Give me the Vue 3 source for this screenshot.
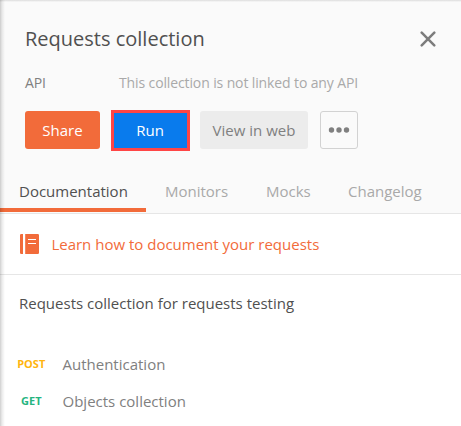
<script setup>
const tabs = ['Documentation', 'Monitors', 'Mocks', 'Changelog']
const requests = [
  { method: 'POST', name: 'Authentication' },
  { method: 'GET', name: 'Objects collection' },
]
</script>

<template>
  <main class="panel">
    <header class="header">
      <div class="title-row">
        <h1 class="title">Requests collection</h1>
        <button class="close" aria-label="Close">
          <svg width="16" height="16" viewBox="0 0 16 16">
            <path d="M1.7 1.7 14.3 14.3M14.3 1.7 1.7 14.3" fill="none" stroke="#7c7c7c" stroke-width="2.5" stroke-linecap="round" />
          </svg>
        </button>
      </div>
      <div class="api-row">
        <span class="api-label">API</span>
        <span class="api-text">This collection is not linked to any API</span>
      </div>
      <div class="actions">
        <button class="btn share">Share</button>
        <button class="btn run">Run</button>
        <button class="btn view">View in web</button>
        <button class="btn more" aria-label="More actions">
          <svg width="22" height="6" viewBox="0 0 22 6" fill="#808080">
            <circle cx="3.5" cy="3" r="2.7" />
            <circle cx="11" cy="3" r="2.7" />
            <circle cx="18.5" cy="3" r="2.7" />
          </svg>
        </button>
      </div>
      <nav class="tabs">
        <a v-for="(tab, i) in tabs" :key="tab" class="tab" :class="[tab.toLowerCase(), { active: i === 0 }]">{{ tab }}</a>
      </nav>
    </header>
    <a class="learn">
      <svg width="19" height="20" viewBox="0 0 19 20">
        <path d="M1.2 0H3V20H1.2A1.2 1.2 0 0 1 0 18.8V1.2A1.2 1.2 0 0 1 1.2 0ZM5.2 0H17.8A1.2 1.2 0 0 1 19 1.2V18.8A1.2 1.2 0 0 1 17.8 20H5.2Z" fill="#f26b3a" />
        <path d="M8 5.5H16M8 9.5H16" stroke="#fff" stroke-width="1.2" />
      </svg>
      <span class="learn-text">Learn how to document your requests</span>
    </a>
    <p class="description">Requests collection for requests testing</p>
    <ul class="requests">
      <li v-for="r in requests" :key="r.name" class="request">
        <span class="method" :class="r.method.toLowerCase()">{{ r.method }}</span>
        <span class="name">{{ r.name }}</span>
      </li>
    </ul>
  </main>
</template>

<style>
body {
  margin: 0;
}
</style>

<style scoped>
.panel {
  position: relative;
  box-sizing: border-box;
  width: 461px;
  height: 426px;
  overflow: hidden;
  background: #fff;
  font-family: "Open Sans", sans-serif;
  font-size: 15px;
  line-height: 20px;
  color: #505050;
  white-space: nowrap;
}
.panel::after {
  content: "";
  position: absolute;
  inset: 0;
  pointer-events: none;
  background:
    linear-gradient(to right, rgba(0, 0, 0, 0.19), rgba(0, 0, 0, 0.08) 2px, rgba(0, 0, 0, 0) 5px),
    linear-gradient(to bottom, rgba(0, 0, 0, 0.12), rgba(0, 0, 0, 0) 2px);
}
.header {
  box-sizing: border-box;
  height: 214px;
  background: #fafafa;
  border-bottom: 1px solid #e6e6e6;
}
.title-row {
  display: flex;
  align-items: center;
  justify-content: space-between;
  height: 28px;
  padding: 25px 25px 0;
}
.title {
  margin: 0;
  font-size: 20px;
  font-weight: 400;
  line-height: 28px;
}
.close {
  display: flex;
  padding: 0;
  border: 0;
  background: none;
}
.api-row {
  display: flex;
  padding: 20px 25px 0;
  font-size: 14px;
  letter-spacing: -0.12px;
  color: #808080;
}
.api-label {
  width: 94px;
}
.api-text {
  color: #a9a9a9;
}
.actions {
  display: flex;
  align-items: center;
  height: 42px;
  margin-top: 16px;
  padding-left: 25px;
}
.btn {
  box-sizing: border-box;
  display: flex;
  align-items: center;
  justify-content: center;
  height: 38px;
  padding: 0;
  border: 0;
  border-radius: 3px;
  font: 15px/20px "Open Sans", sans-serif;
  color: #fff;
}
.share {
  width: 75px;
  background: #f26b3a;
}
.run {
  width: 79px;
  height: 41px;
  margin-left: 11px;
  padding-right: 1px;
  border: 3px solid #ff4545;
  border-radius: 0;
  background: #097bed;
}
.view {
  width: 108px;
  margin-left: 10px;
  background: #ececec;
  color: #808080;
}
.more {
  width: 38px;
  margin-left: 12px;
  border: 1px solid #d2d2d2;
  background: #fafafa;
}
.tabs {
  display: flex;
  height: 41px;
  margin-top: 20px;
}
.tab {
  box-sizing: border-box;
  height: 41px;
  padding: 10px 19px 0;
  color: #a9a9a9;
}
.active {
  width: 146px;
  border-bottom: 4px solid #f26b3a;
  color: #505050;
}
.monitors {
  width: 101px;
}
.mocks {
  width: 82px;
}
.learn {
  box-sizing: border-box;
  display: flex;
  align-items: center;
  height: 61px;
  padding-left: 20px;
  border-bottom: 1px solid #e6e6e6;
  color: #f26b3a;
}
.learn-text {
  margin-left: 12.4px;
}
.description {
  margin: 0;
  padding: 18px 19px 0;
}
.requests {
  margin: 32px 0 0;
  padding: 0;
  list-style: none;
}
.request {
  display: flex;
  align-items: center;
  height: 37px;
  color: #808080;
}
.method {
  width: 62.5px;
  font-size: 11px;
  font-weight: 700;
  text-align: center;
}
.post {
  color: #ffb50f;
}
.get {
  color: #26b47f;
}
</style>
